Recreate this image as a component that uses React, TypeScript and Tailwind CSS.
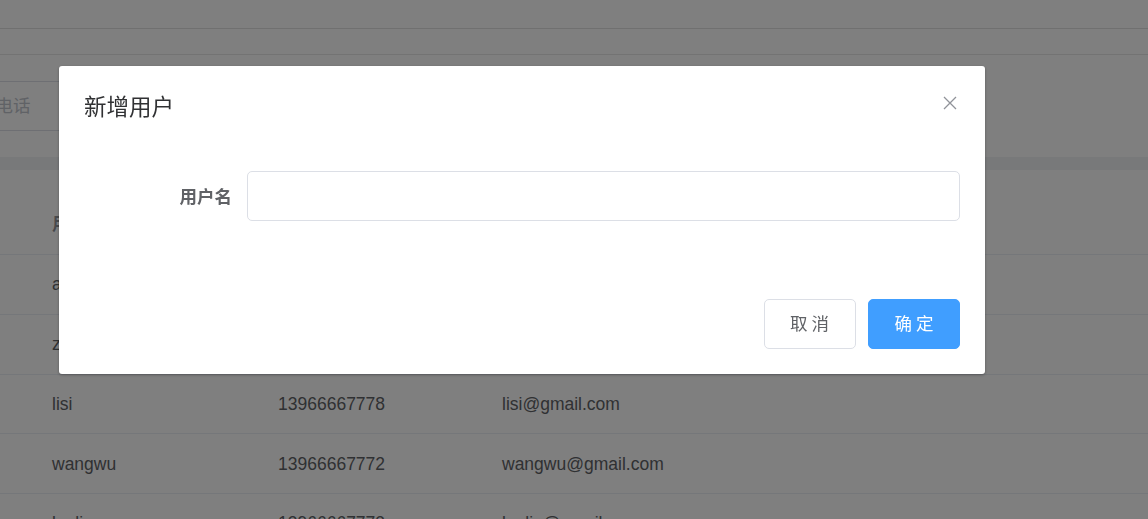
import { useState } from "react";

const users = [
  { name: "admin", phone: "13966667777", email: "admin@gmail.com" },
  { name: "zhangsan", phone: "13966667771", email: "zhangsan@gmail.com" },
  { name: "lisi", phone: "13966667778", email: "lisi@gmail.com" },
  { name: "wangwu", phone: "13966667772", email: "wangwu@gmail.com" },
  { name: "laoliu", phone: "13966667773", email: "laoliu@gmail.com" },
];

const font = "font-['Liberation_Sans','Noto_Sans_CJK_SC',sans-serif]";

const App = () => {
  const [username, setUsername] = useState("");

  return (
    <div className={`relative h-[519px] overflow-hidden bg-white ${font}`}>
      {/* page behind the dialog */}
      <div className="h-[29px] border-b border-[#e0e0e0] bg-white shadow-[0_1px_4px_rgba(0,21,41,0.12)]" />
      <div className="h-[26px] border-b border-[#e6e6e6] bg-white" />
      <div className="flex h-[102px] items-start pt-[26px]">
        <input
          type="text"
          placeholder="请输入电话"
          className="-ml-[70px] h-[50px] w-[440px] rounded-[5px] border border-[#dcdfe6] pl-[12px] text-[17.5px] text-[#606266] placeholder-[#c0c4cc] outline-none"
        />
      </div>
      <div className="h-[13px] bg-[#f0f2f5]" />
      <div className="pt-[25px] text-[17.5px] text-[#606266]">
        <div className="flex h-[60px] items-center border-b border-[#ebeef5] font-bold text-[#909399]">
          <div className="w-[278px] pl-[52px]">用户名</div>
          <div className="w-[224px]">电话</div>
          <div>邮箱</div>
        </div>
        {users.map((u) => (
          <div key={u.name} className="flex h-[59.75px] items-center border-b border-[#ebeef5]">
            <div className="w-[278px] pl-[52px]">{u.name}</div>
            <div className="w-[224px]">{u.phone}</div>
            <div>{u.email}</div>
          </div>
        ))}
      </div>

      {/* mask */}
      <div className="fixed inset-0 bg-black/50" />

      {/* dialog */}
      <div className="fixed inset-0 flex items-start pl-[59px] pt-[66px]">
        <div className="w-[926px] rounded-[3px] bg-white shadow-[0_1px_3px_rgba(0,0,0,0.3)]">
          <div className="flex items-start justify-between px-[25px] pb-[12.5px] pt-[24px]">
            <span className="text-[22.5px] leading-[30px] text-[#303133] font-['Noto_Sans_CJK_SC',sans-serif]">
              新增用户
            </span>
            <button className="mt-[3px] flex h-[20px] w-[20px] items-center justify-center text-[#909399]">
              <svg width="14" height="14" viewBox="0 0 14 14" fill="none">
                <path d="M1 1L13 13M13 1L1 13" stroke="currentColor" strokeWidth="1.3" />
              </svg>
            </button>
          </div>
          <div className="px-[25px] pb-[37.5px] pt-[38.5px]">
            <div className="mb-[27.5px] flex items-center">
              <label className="w-[163px] pr-[15px] text-right text-[17.5px] font-bold text-[#606266] font-['Noto_Sans_CJK_SC',sans-serif]">
                用户名
              </label>
              <input
                type="text"
                value={username}
                onChange={(e) => setUsername(e.target.value)}
                className="h-[50px] flex-1 rounded-[5px] border border-[#dcdfe6] px-[19px] text-[17.5px] text-[#606266] outline-none"
              />
            </div>
          </div>
          <div className="flex justify-end gap-[12.5px] px-[25px] pb-[25px] pt-[12.5px] font-['Noto_Sans_CJK_SC',sans-serif]">
            <button className="h-[50px] w-[92px] rounded-[5px] border border-[#dcdfe6] bg-white text-[17.5px] text-[#606266]">
              取 消
            </button>
            <button className="h-[50px] w-[92px] rounded-[5px] border border-[#409eff] bg-[#409eff] text-[17.5px] text-white">
              确 定
            </button>
          </div>
        </div>
      </div>
    </div>
  );
};

export default App;
